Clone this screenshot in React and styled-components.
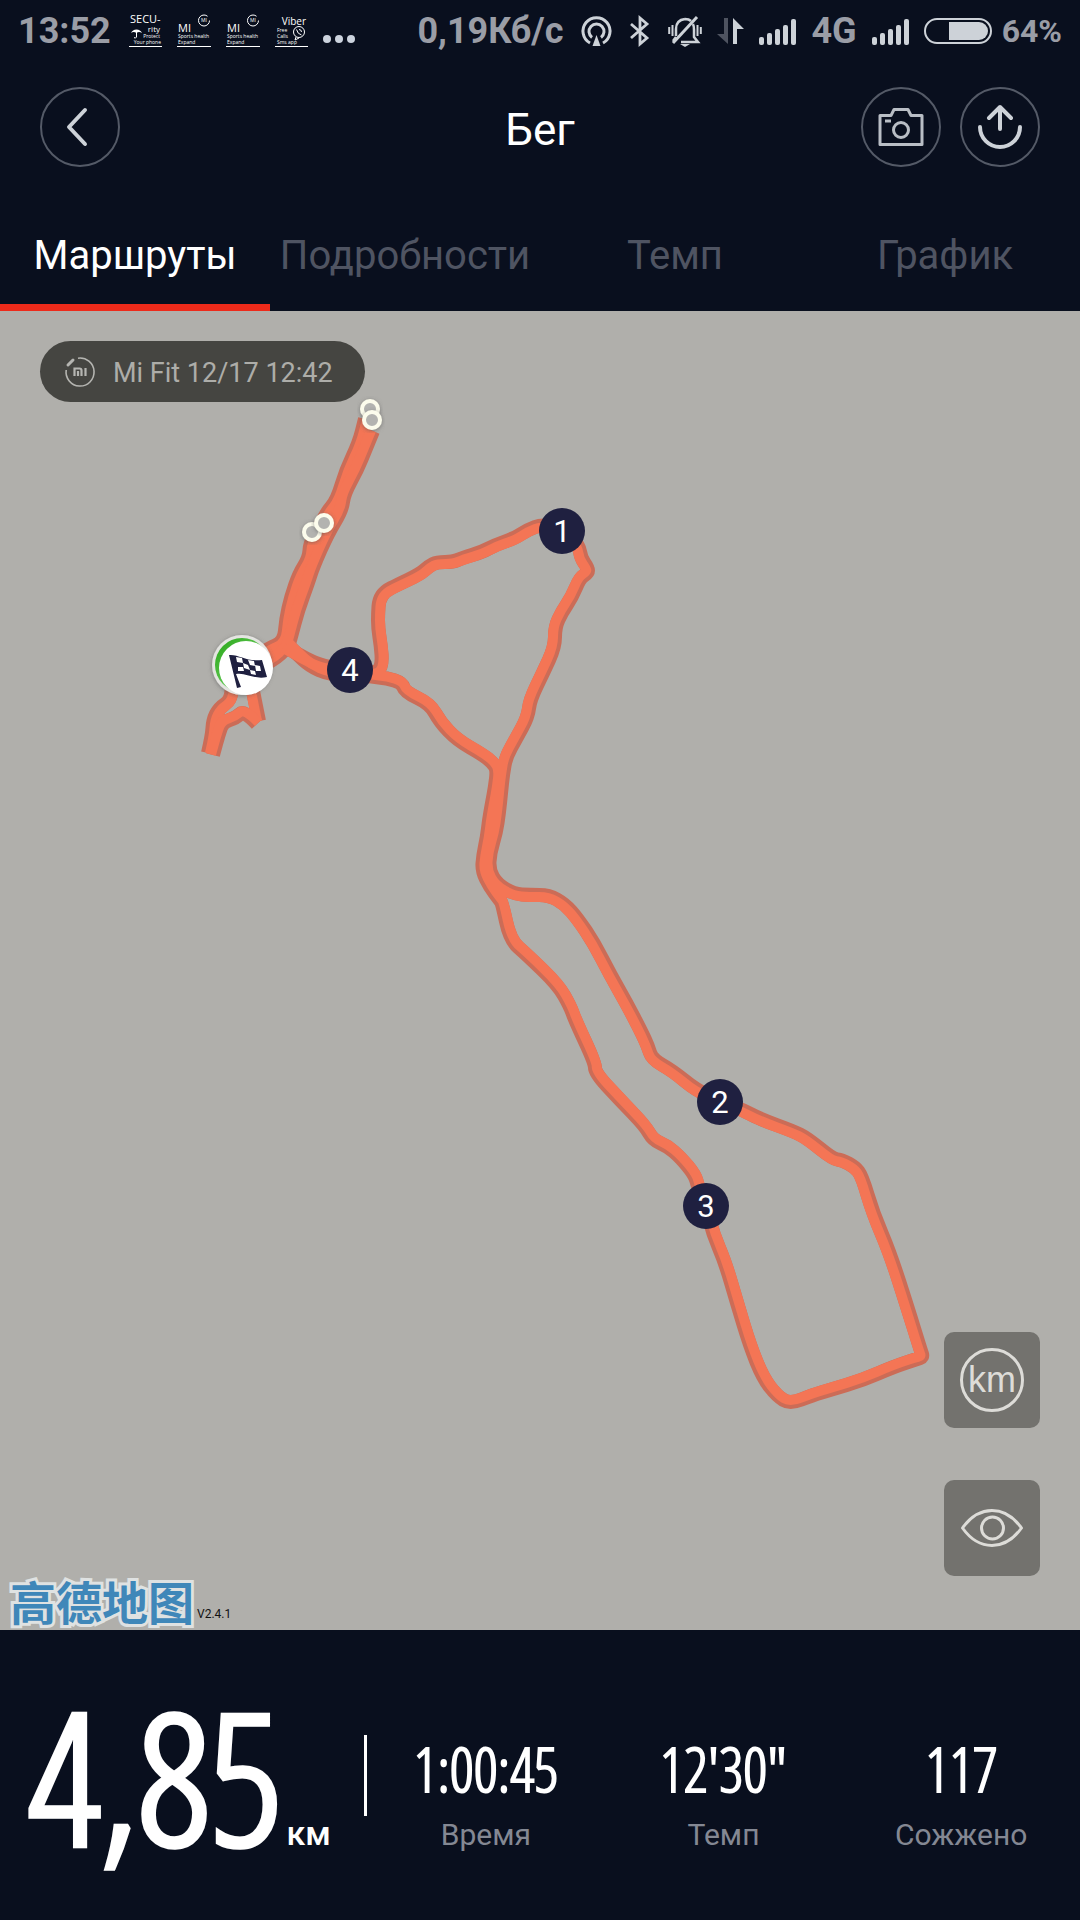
import React from "react";
import styled, { createGlobalStyle } from "styled-components";

const c = {
  ink: "#090f1e",
  map: "#b0afab",
  light: "#cdd2d8",
  dim: "#9a9da6",
  muted: "#4f5462",
  ring: "#545a67",
  red: "#ed2a1a",
  route: "#f47555",
  routeEdge: "#cb6c57",
  pin: "#1f2040",
};

const Global = createGlobalStyle`
  * { box-sizing: border-box; }
  body { margin: 0; background: ${c.ink}; font-family: Roboto, "Open Sans", sans-serif; }
  button { font: inherit; border: 0; padding: 0; background: none; cursor: pointer; }
`;

const Page = styled.div`
  display: flex;
  flex-direction: column;
  min-height: 100vh;
  color: #fff;
  background: ${c.ink};
`;

/* ---------- status bar ---------- */

const StatusBar = styled.div`
  display: flex;
  align-items: center;
  justify-content: space-between;
  height: 60px;
  padding: 2px 18px 0;
  font-size: 36px;
  line-height: 58px;
  color: ${c.dim};
`;
const StatusGroup = styled.div`
  display: flex;
  align-items: center;
  gap: ${(p) => p.$gap}px;
  white-space: nowrap;
`;
const StatusText = styled.span`
  font-size: ${(p) => p.$size || 36}px;
  font-weight: ${(p) => p.$weight || 700};
`;
const Glyph = styled.svg`
  display: block;
  flex: none;
  overflow: visible;
`;

/* ---------- header ---------- */

const Header = styled.header`
  display: grid;
  grid-template-columns: 1fr auto 1fr;
  align-items: center;
  height: 134px;
  padding: 0 40px;
`;
const Title = styled.h1`
  margin: 0;
  padding-top: 6px;
  font-size: 44px;
  line-height: 52px;
  font-weight: 400;
`;
const Actions = styled.div`
  display: flex;
  justify-content: flex-end;
  gap: 19px;
`;
const RoundButton = styled.button`
  display: grid;
  place-items: center;
  width: 80px;
  height: 80px;
  border: 2px solid ${c.ring};
  border-radius: 50%;
`;

const Tabs = styled.nav`
  display: grid;
  grid-template-columns: repeat(4, 1fr);
  height: 117px;
`;
const Tab = styled.button`
  padding-top: 14px;
  border-bottom: 7px solid ${(p) => (p.$active ? c.red : "transparent")};
  font-size: 40px;
  line-height: 48px;
  color: ${(p) => (p.$active ? "#fff" : c.muted)};
`;

/* ---------- map ---------- */

const MapArea = styled.main`
  position: relative;
  flex: 1;
  min-height: 900px;
  display: flex;
  flex-direction: column;
  justify-content: space-between;
  background: ${c.map};
`;
const RouteLayer = styled.svg`
  position: absolute;
  inset: 0;
  width: 100%;
  height: 100%;
`;
const PinLabel = styled.text`
  font: 400 31px Roboto, sans-serif;
  fill: #fff;
  text-anchor: middle;
`;
const Source = styled.div`
  position: relative;
  display: flex;
  align-items: center;
  gap: 18px;
  align-self: flex-start;
  height: 61px;
  margin: 30px 40px;
  padding: 0 32px 0 25px;
  border-radius: 31px;
  background: #454541;
  color: #adada9;
  font-size: 27px;
  line-height: 32px;
`;
const SourceText = styled.span`
  padding-top: 2px;
`;
const MapFoot = styled.div`
  position: relative;
  display: flex;
  justify-content: space-between;
  align-items: flex-end;
`;
const Attribution = styled.div`
  display: flex;
  align-items: flex-end;
  padding: 0 0 5px 10px;
`;
const MapLogo = styled.span`
  font: 700 46px/50px "Noto Sans CJK SC", sans-serif;
  color: #3f87b9;
  paint-order: stroke fill;
  -webkit-text-stroke: 6px #dfe2e2;
`;
const Version = styled.span`
  padding: 0 0 3px 3px;
  font: 400 12px/16px Roboto, sans-serif;
  color: #111;
`;
const MapTools = styled.div`
  display: flex;
  flex-direction: column;
  gap: 52px;
  padding: 0 40px 54px 0;
`;
const ToolButton = styled.button`
  display: grid;
  place-items: center;
  width: 96px;
  height: 96px;
  border-radius: 10px;
  background: #73726e;
  color: #dddcd8;
`;
const UnitBadge = styled.span`
  display: grid;
  place-items: center;
  width: 64px;
  height: 64px;
  border: 3px solid;
  border-radius: 50%;
  font: 400 36px/40px "Liberation Sans", sans-serif;
`;

/* ---------- summary ---------- */

const Summary = styled.section`
  display: grid;
  grid-template-columns: 367px 1fr;
  height: 290px;
`;
const Distance = styled.div`
  display: flex;
  align-items: center;
  justify-content: space-between;
  padding-left: 28px;
`;
const DistanceText = styled.div`
  display: flex;
  align-items: baseline;
  gap: 4px;
`;
const DistanceValue = styled.strong`
  font: 700 181px/286px "Open Sans Condensed Light", "Roboto Condensed", sans-serif;
`;
const Unit = styled.span`
  font-size: 34px;
  line-height: 40px;
  font-weight: 500;
`;
const Divider = styled.span`
  width: 3px;
  height: 81px;
  background: #fff;
`;
const Stats = styled.dl`
  display: grid;
  grid-template-columns: repeat(3, 1fr);
  margin: 0;
  padding-top: 104px;
  text-align: center;
`;
const Stat = styled.div`
  display: flex;
  flex-direction: column-reverse;
  justify-content: flex-end;
  gap: 13px;
`;
const StatValue = styled.dd`
  margin: 0;
  font: 700 60px/70px "Open Sans Condensed Light", "Roboto Condensed", sans-serif;
`;
const StatLabel = styled.dt`
  font-size: 30px;
  line-height: 36px;
  color: #848893;
`;

/* ---------- route data (map canvas is 1080 x 1319) ---------- */

const routes = [
  // northern spur, out and back
  [[242, 354], [267, 338], [284, 331], [286, 308], [291, 286], [299, 263], [309, 247], [310, 232], [317, 222], [326, 202], [337, 189], [346, 159], [359, 132], [365, 108]],
  [[373, 120], [366, 137], [357, 159], [344, 183], [342, 199], [328, 222], [313, 256], [308, 272], [298, 299], [291, 326], [288, 336], [273, 350], [242, 364]],
  // spur junction to the fourth kilometre, and back
  [[284, 335], [306, 348], [323, 355], [350, 360]],
  [[350, 366], [328, 363], [310, 355], [297, 343], [288, 334]],
  // first loop and the way to the far corner
  [[350, 358], [370, 362], [379, 360], [382, 351], [381, 336], [378, 317], [378, 302], [379, 289], [385, 280], [397, 274], [420, 263], [429, 255], [437, 251], [453, 251], [462, 247], [482, 241], [495, 234], [515, 227], [527, 219], [543, 213], [563, 219], [579, 234], [581, 247], [588, 257], [588, 262], [580, 267], [572, 286], [562, 301], [555, 316], [555, 336], [543, 362], [530, 389], [528, 406], [516, 428], [506, 446], [503, 463], [501, 482], [499, 502], [496, 522], [490, 542], [489, 559], [497, 573], [514, 583], [530, 584], [549, 584], [565, 593], [578, 608], [594, 632], [610, 663], [627, 693], [641, 720], [648, 735], [652, 748], [673, 760], [696, 779], [720, 790], [743, 799], [760, 808], [793, 820], [807, 827], [833, 848], [842, 849], [855, 856], [862, 865], [873, 902], [890, 942], [908, 998], [921, 1040], [923, 1046], [917, 1048], [893, 1056], [863, 1069], [830, 1079], [813, 1084], [790, 1093], [777, 1085], [763, 1067], [750, 1035], [737, 992], [725, 951], [713, 923], [706, 895], [698, 876], [695, 864], [680, 846], [667, 835], [653, 829], [645, 815], [620, 789], [595, 762], [595, 752], [575, 709], [570, 695], [558, 674], [527, 644], [510, 629], [502, 592], [499, 588], [490, 576], [482, 560], [483, 545], [487, 526], [489, 509], [492, 492], [495, 476], [497, 459], [493, 452], [483, 444], [457, 429], [440, 411], [430, 393], [405, 381], [402, 372], [387, 367], [370, 366], [350, 360]],
  // start of the run below the finish flag
  [[208, 442], [212, 425], [213, 409], [219, 397], [231, 389], [232, 370]],
  [[251, 370], [259, 410]],
  [[257, 413], [244, 399], [236, 407], [223, 411], [219, 422], [213, 444]],
];

/* Round each bend by curving between the middles of neighbouring segments. */
const toPath = (pts) => {
  const last = pts[pts.length - 1];
  let d = `M${pts[0]}`;
  for (let i = 1; i < pts.length - 1; i++) {
    const [x, y] = pts[i];
    const n = pts[i + 1];
    d += `Q${x} ${y} ${(x + n[0]) / 2} ${(y + n[1]) / 2}`;
  }
  return d + `L${last}`;
};

/* Shift a line towards the right of its direction of travel. */
const shift = (pts, d) =>
  pts.map(([x, y], i) => {
    const a = pts[Math.max(0, i - 1)];
    const b = pts[Math.min(pts.length - 1, i + 1)];
    const dx = b[0] - a[0];
    const dy = b[1] - a[1];
    const l = Math.hypot(dx, dy) || 1;
    return [x - (dy / l) * d, y + (dx / l) * d];
  });

const kilometres = [
  { n: 1, x: 562, y: 220 },
  { n: 2, x: 720, y: 791 },
  { n: 3, x: 706, y: 895 },
  { n: 4, x: 350, y: 359 },
];
const pauses = [[370, 98], [372, 109], [312, 221], [324, 212]];

function RouteMap() {
  return (
    <RouteLayer viewBox="0 0 1080 1319" preserveAspectRatio="xMidYMid slice" role="img" aria-label="Маршрут">
      <defs>
        <filter id="soft" x="-30%" y="-30%" width="160%" height="160%">
          <feDropShadow dx="0" dy="1" stdDeviation="2" floodColor="#555" floodOpacity="0.6" />
        </filter>
        <linearGradient id="crescent" x1="0" y1="0" x2="1" y2="1">
          <stop offset="0" stopColor="#27a617" />
          <stop offset="0.5" stopColor="#5cc44e" />
        </linearGradient>
      </defs>
      <g fill="none" strokeLinejoin="round">
        {routes.map((r, i) => <path key={i} d={toPath(r)} stroke={c.routeEdge} strokeWidth="14" />)}
        {routes.map((r, i) => <path key={i} d={toPath(shift(r, 2))} stroke={c.route} strokeWidth="10" />)}
      </g>
      {pauses.map(([x, y]) => (
        <circle key={`${x}-${y}`} cx={x} cy={y} r="8" fill="#b3b3b0" stroke="#fcfcec" strokeWidth="4" filter="url(#soft)" />
      ))}
      {kilometres.map(({ n, x, y }) => (
        <g key={n}>
          <circle cx={x} cy={y} r="23" fill={c.pin} />
          <PinLabel x={x} y={y + 11}>{n}</PinLabel>
        </g>
      ))}
      <g transform="translate(242 354)">
        <circle r="30" fill="#e4e4e1" filter="url(#soft)" />
        <circle r="27" fill="url(#crescent)" />
        <circle r="27" cx="4" cy="3" fill="#fff" />
        <path d="M-13-10C-3-11 4-3 20-5L25 12C12 15 4 7-6 9L-1 22-5 23z" fill={c.pin} />
        <path d="M-6-8l6 1 1 5-6-1zM6-5l6 1 1 5-5-1zM1-2l5 2 2 5-6-2zM13 0l5 1 1 5-5 0zM-4 2l5 0 1 4-6 0zM8 5l5 1 1 4-5-1z" fill="#fff" />
      </g>
    </RouteLayer>
  );
}

/* ---------- icons ---------- */

const Mini = styled.text`
  font: 400 ${(p) => p.$s}px "Open Sans", sans-serif;
  fill: #fff;
  text-anchor: ${(p) => (p.$end ? "end" : "start")};
`;

const SecurityNote = () => (
  <Glyph width="33" height="34" viewBox="0 0 33 34">
    <Mini x="1" y="9" $s="11">SECU-</Mini>
    <Mini x="31" y="18" $s="8" $end>rity</Mini>
    <Mini x="31" y="24" $s="5" $end>Protect</Mini>
    <Mini x="32" y="30" $s="5" $end>Your phone</Mini>
    <path d="M2 19a6 6 0 0 1 11 0q-3-2-5.500 0q-3-2-5.500 0z" fill="#fff" />
    <path d="M7.500 18v5q-1 2-2.500 0.500" fill="none" stroke="#fff" />
    <path d="M0 32.500h33" stroke="#fff" />
  </Glyph>
);
const MiNote = () => (
  <Glyph width="34" height="34" viewBox="0 0 34 34">
    <Mini x="1" y="18" $s="11">MI</Mini>
    <circle cx="27" cy="6.500" r="5.500" fill="none" stroke="#fff" strokeDasharray="29 5" />
    <Mini x="24" y="8" $s="5">MI</Mini>
    <Mini x="1" y="24" $s="5">Sports health</Mini>
    <Mini x="1" y="30" $s="5">Expand</Mini>
    <path d="M0 32.500h34" stroke="#fff" />
  </Glyph>
);
const ViberNote = () => (
  <Glyph width="33" height="34" viewBox="0 0 33 34">
    <Mini x="31" y="11" $s="10" $end>Viber</Mini>
    <Mini x="2" y="18" $s="5">Free</Mini>
    <Mini x="2" y="24" $s="5">Calls</Mini>
    <Mini x="2" y="30" $s="5">Sms app</Mini>
    <circle cx="24" cy="18" r="5.500" fill="none" stroke="#fff" />
    <path d="M21.500 15.500q1 4.500 5 5.500M24 15.500q2.500 0 2.500 2.500M21 23l-1 3 4-2" fill="none" stroke="#fff" />
    <path d="M0 32.500h33" stroke="#fff" />
  </Glyph>
);
const Dots = () => (
  <Glyph width="32" height="34" viewBox="0 0 32 34" fill="#ccd3de">
    <circle cx="4" cy="25" r="4" /><circle cx="16" cy="25" r="4" /><circle cx="28" cy="25" r="4" />
  </Glyph>
);
const Hotspot = () => (
  <Glyph width="31" height="30" viewBox="0 0 31 30" fill="none" stroke={c.light} strokeWidth="3">
    <path d="M9 27A13.500 13.500 0 1 1 22 27" />
    <path d="M11 21.500A7.500 7.500 0 1 1 20 21.500" />
    <path d="M15.500 19l4 11h-8z" fill={c.light} stroke="none" />
  </Glyph>
);
const Bluetooth = () => (
  <Glyph width="20" height="30" viewBox="0 0 20 30" fill="none" stroke={c.light} strokeWidth="2.800">
    <path d="M1 8l16 14-7 6V2l7 6L1 22" />
  </Glyph>
);
const Muted = () => (
  <Glyph width="34" height="31" viewBox="0 0 34 31" fill="none" stroke={c.light} strokeWidth="2.500">
    <path d="M8 20v-7q0-9 9-10M25 8q1 2 1 6v7l4 5H13M8 21l-3 4M17 3q4 0 6 2" />
    <path d="M29 1L5 27" strokeWidth="3" />
    <path d="M1.200 11v7M4.500 9v11M32.800 11v7M29.500 9v11" strokeWidth="2" />
    <path d="M12 28h10l-5 3z" fill={c.light} stroke="none" />
  </Glyph>
);
const Traffic = () => (
  <Glyph width="27" height="27" viewBox="0 0 27 27">
    <path d="M7 0h4v26L0 16h7z" fill="#4e5360" />
    <path d="M16 26h4V11h7L16 0z" fill={c.light} />
  </Glyph>
);
const Signal = () => (
  <Glyph width="37" height="27" viewBox="0 0 37 27" fill={c.light}>
    {[8, 12, 16, 20, 26].map((h, i) => <rect key={h} x={i * 8} y={27 - h} width="5" height={h} rx="2" />)}
  </Glyph>
);
const Battery = () => (
  <Glyph width="68" height="26" viewBox="0 0 68 26">
    <rect x="1" y="1" width="66" height="24" rx="12" fill="none" stroke={c.light} strokeWidth="2" />
    <path d="M25 4h30a9 9 0 0 1 0 18H25z" fill={c.light} />
  </Glyph>
);

const Back = () => (
  <Glyph width="24" height="38" viewBox="0 0 24 38" fill="none" stroke={c.light} strokeWidth="4" strokeLinecap="round" strokeLinejoin="round">
    <path d="M17 2L1 19l16 17" />
  </Glyph>
);
const Camera = () => (
  <Glyph width="46" height="40" viewBox="0 0 46 40" fill="none" stroke="#b9bec5" strokeWidth="3" strokeLinejoin="round">
    <path d="M2 8.500h11l3-6h14l3 6h11v29H2z" />
    <circle cx="23" cy="23" r="7.500" />
    <path d="M7 14h6" />
  </Glyph>
);
const Share = () => (
  <Glyph width="44" height="44" viewBox="0 0 44 44" fill="none" stroke={c.light} strokeWidth="4" strokeLinecap="round" strokeLinejoin="round">
    <path d="M2 22a20 20 0 0 0 40 0M22 24V2M11 13L22 2l11 11" />
  </Glyph>
);
const MiBand = () => (
  <Glyph width="30" height="30" viewBox="0 0 30 30" fill="none" stroke="#b5b5b1" strokeWidth="1.600">
    <path d="M13 1.200A14 14 0 1 1 1.200 13" />
    <path d="M3 8l5-5" strokeWidth="3" strokeLinecap="round" />
    <path d="M9.500 19v-7.500h5q2 0 2 2V19M13 14v5M20.500 11v8" strokeWidth="2.200" />
  </Glyph>
);
const Eye = () => (
  <Glyph width="62" height="38" viewBox="0 0 62 38" fill="none" stroke="currentColor" strokeWidth="3" strokeLinejoin="round">
    <path d="M1.500 19Q14 1.500 31 1.500T60.500 19Q48 36.500 31 36.500T1.500 19z" />
    <circle cx="31.500" cy="19" r="11" />
  </Glyph>
);

const tabs = ["Маршруты", "Подробности", "Темп", "График"];
const stats = [
  ["Время", "1:00:45"],
  ["Темп", "12'30\""],
  ["Сожжено", "117"],
];

export default function App() {
  const [active, setActive] = React.useState(0);
  return (
    <Page>
      <Global />
      <StatusBar>
        <StatusGroup $gap={18}>
          <StatusText>13:52</StatusText>
          <StatusGroup $gap={15}>
            <SecurityNote />
            <MiNote />
            <MiNote />
            <ViberNote />
            <Dots />
          </StatusGroup>
        </StatusGroup>
        <StatusGroup $gap={15}>
          <StatusGroup $gap={18}>
            <StatusText>0,19Кб/с</StatusText>
            <Hotspot />
            <Bluetooth />
            <Muted />
          </StatusGroup>
          <Traffic />
          <Signal />
          <StatusText>4G</StatusText>
          <Signal />
          <StatusGroup $gap={10}>
            <Battery />
            <StatusText $size={32}>64%</StatusText>
          </StatusGroup>
        </StatusGroup>
      </StatusBar>

      <Header>
        <RoundButton type="button" aria-label="Назад"><Back /></RoundButton>
        <Title>Бег</Title>
        <Actions>
          <RoundButton type="button" aria-label="Камера"><Camera /></RoundButton>
          <RoundButton type="button" aria-label="Поделиться"><Share /></RoundButton>
        </Actions>
      </Header>

      <Tabs>
        {tabs.map((t, i) => (
          <Tab key={t} type="button" $active={i === active} onClick={() => setActive(i)}>{t}</Tab>
        ))}
      </Tabs>

      <MapArea>
        <RouteMap />
        <Source><MiBand /><SourceText>Mi Fit 12/17 12:42</SourceText></Source>
        <MapFoot>
          <Attribution>
            <MapLogo lang="zh">高德地图</MapLogo>
            <Version>V2.4.1</Version>
          </Attribution>
          <MapTools>
            <ToolButton type="button"><UnitBadge>km</UnitBadge></ToolButton>
            <ToolButton type="button" aria-label="Показать карту"><Eye /></ToolButton>
          </MapTools>
        </MapFoot>
      </MapArea>

      <Summary>
        <Distance>
          <DistanceText>
            <DistanceValue>4,85</DistanceValue>
            <Unit>км</Unit>
          </DistanceText>
          <Divider />
        </Distance>
        <Stats>
          {stats.map(([label, value]) => (
            <Stat key={label}>
              <StatLabel>{label}</StatLabel>
              <StatValue>{value}</StatValue>
            </Stat>
          ))}
        </Stats>
      </Summary>
    </Page>
  );
}
